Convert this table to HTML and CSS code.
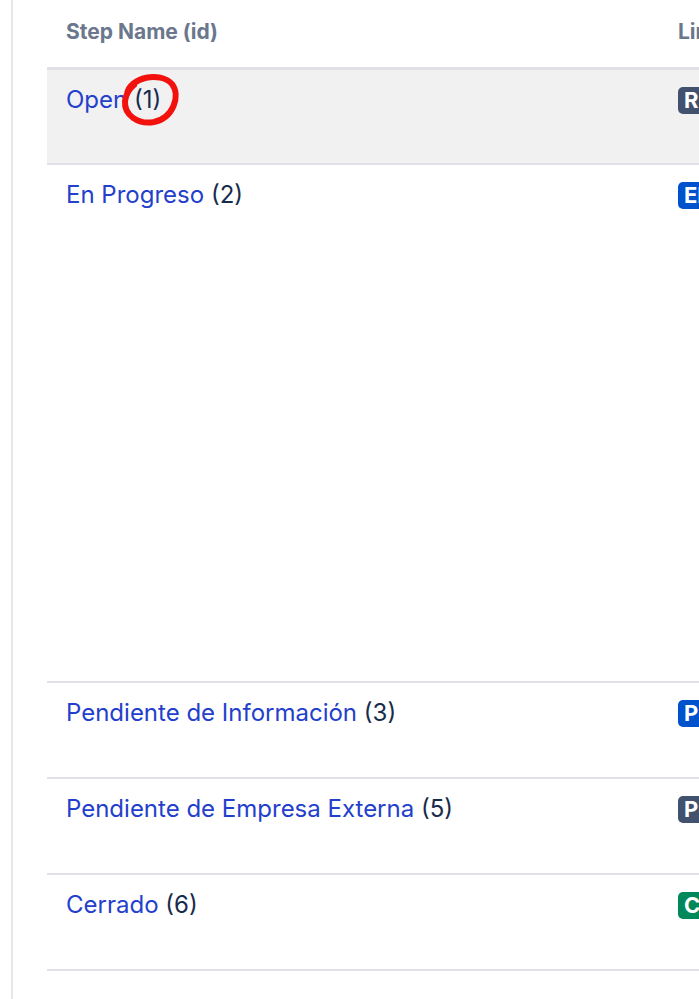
FILE: index.html
```html
<!DOCTYPE html>
<html>
<head>
<meta charset="utf-8">
<link rel="stylesheet" href="styles.css">
</head>
<body>
<div class="page">
  <table class="steps">
    <thead>
      <tr>
        <th class="col-name">Step Name (id)</th>
        <th class="col-links">Linked Status</th>
      </tr>
    </thead>
    <tbody>
      <tr class="row selected">
        <td class="col-name"><a class="step-link">Open</a> <span class="step-id">(1)</span></td>
        <td class="col-links"><span class="lozenge grey">RESUELTO</span></td>
      </tr>
      <tr class="row tall">
        <td class="col-name"><a class="step-link">En Progreso</a> <span class="step-id">(2)</span></td>
        <td class="col-links"><span class="lozenge blue">EN PROGRESO</span></td>
      </tr>
      <tr class="row">
        <td class="col-name"><a class="step-link">Pendiente de Información</a> <span class="step-id">(3)</span></td>
        <td class="col-links"><span class="lozenge blue">PENDIENTE</span></td>
      </tr>
      <tr class="row">
        <td class="col-name"><a class="step-link">Pendiente de Empresa Externa</a> <span class="step-id">(5)</span></td>
        <td class="col-links"><span class="lozenge grey">PENDIENTE</span></td>
      </tr>
      <tr class="row">
        <td class="col-name"><a class="step-link">Cerrado</a> <span class="step-id">(6)</span></td>
        <td class="col-links"><span class="lozenge green">CERRADO</span></td>
      </tr>
    </tbody>
  </table>
  <svg class="mark" width="64" height="58" viewBox="0 0 64 58" aria-hidden="true">
    <path d="M9 24 C12 7, 42 1, 54 14 C63 26, 55 48, 36 52 C20 55, 6 45, 7 31 C8 24, 11 19, 16 15" fill="none" stroke="#f2110d" stroke-width="6" stroke-linecap="round"/>
  </svg>
</div>
</body>
</html>
```

FILE: styles.css
```css
html, body {
  margin: 0;
  padding: 0;
  background: #ffffff;
  overflow: hidden;
}

body {
  width: 699px;
  height: 999px;
  font-family: Inter, "Liberation Sans", sans-serif;
}

.page {
  position: relative;
  margin-left: 11px;
  border-left: 2px solid #e4e6ea;
  height: 999px;
  padding-left: 34px;
}

.steps {
  border-collapse: collapse;
  width: 900px;
  table-layout: fixed;
}

.steps th {
  text-align: left;
  font-size: 21px;
  font-weight: 700;
  color: #6b778c;
  height: 68px;
  padding: 0 19px 3px;
  vertical-align: middle;
  border-bottom: 3px solid #dfe1e6;
  box-sizing: border-box;
}

.col-name {
  width: 612px;
}

.steps td {
  vertical-align: top;
  padding: 14px 19px 0;
  height: 96px;
  box-sizing: border-box;
  border-bottom: 2px solid #dfe1e6;
  font-size: 24px;
  line-height: 32px;
}

.row.selected td {
  background: #f1f1f1;
}

.row.tall td {
  height: 518px;
}

.step-link {
  color: #2340cc;
  text-decoration: none;
}

.step-id {
  color: #172b4d;
}

.lozenge {
  display: inline-block;
  color: #ffffff;
  font-weight: 700;
  font-size: 22px;
  line-height: 27px;
  padding: 0 6px;
  border-radius: 5px;
  margin-top: 3px;
  vertical-align: top;
}

.lozenge.grey { background: #42526e; }
.lozenge.blue { background: #0052cc; }
.lozenge.green { background: #00875a; }

.mark {
  position: absolute;
  left: 105px;
  top: 70px;
}
```
